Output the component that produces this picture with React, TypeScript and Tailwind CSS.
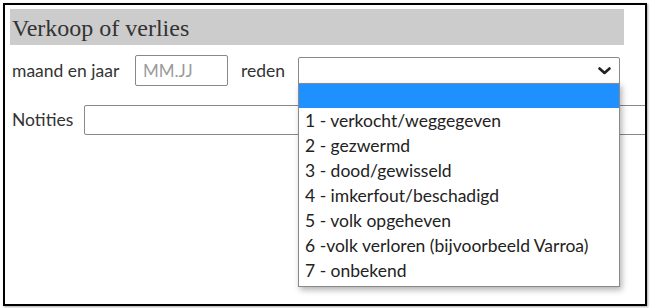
import React from 'react';

const options = [
  '1 - verkocht/weggegeven',
  '2 - gezwermd',
  '3 - dood/gewisseld',
  '4 - imkerfout/beschadigd',
  '5 - volk opgeheven',
  '6 -volk verloren (bijvoorbeeld Varroa)',
  '7 - onbekend',
];

const Chevron: React.FC = () => (
  <svg width="13" height="8" viewBox="0 0 13 8" className="text-[#222]">
    <path d="M1.5 1.5 L6.5 6 L11.5 1.5" fill="none" stroke="currentColor" strokeWidth="2.6" strokeLinecap="round" strokeLinejoin="round" />
  </svg>
);

const App: React.FC = () => {
  return (
    <div className="w-[650px] h-[308px] bg-white p-[3px] font-['Lato',sans-serif] text-[#333]">
      <div className="relative w-[644px] h-[303px] border-2 border-black shadow-[1px_1px_2px_rgba(0,0,0,0.35)] overflow-hidden pl-[5px] pt-[4px]">
        {/* Heading */}
        <div className="w-[614px] h-[36px] bg-[#cccccc] pl-[2px] flex items-center">
          <span className="font-['Liberation_Serif',serif] text-[24px] leading-none text-[#333] pt-[2px]">Verkoop of verlies</span>
        </div>

        {/* maand en jaar / reden */}
        <div className="flex items-center mt-[10px] h-[31px]">
          <span className="ml-[2px] w-[113px] text-[17.5px] leading-none">maand en jaar</span>
          <div className="ml-[10px] w-[93px] h-[31px] border border-[#888] rounded-[2px] flex items-center pl-[7px]">
            <span className="text-[17px] text-[#9a9a9a] leading-none">MM.JJ</span>
          </div>
          <span className="ml-[13px] w-[45px] text-[17.5px] leading-none">reden</span>
          <div className="ml-[12px] w-[322px] h-[27px] border border-[#888] rounded-t-[2px] bg-white flex items-center justify-end pr-[8px]">
            <Chevron />
          </div>
        </div>

        {/* Notities */}
        <div className="flex items-center mt-[19px] h-[30px]">
          <span className="ml-[2px] w-[64px] text-[17.5px] leading-none">Notities</span>
          <div className="ml-[8px] flex-1 h-[30px] border border-[#888] rounded-l-[2px] -mr-[10px]" />
        </div>

        {/* Open dropdown list */}
        <div className="absolute left-[293px] top-[78px] w-[322px] bg-white border border-[#8a8a8a] shadow-[2px_3px_6px_rgba(0,0,0,0.3)]">
          <div className="h-[24px] bg-[#1e90ff]" />
          {options.map((o) => (
            <div key={o} className="h-[25px] flex items-center pl-[6px] text-[17.5px] leading-none text-[#222]">
              {o}
            </div>
          ))}
          <div className="h-[3px]" />
        </div>
      </div>
    </div>
  );
};

export default App;
